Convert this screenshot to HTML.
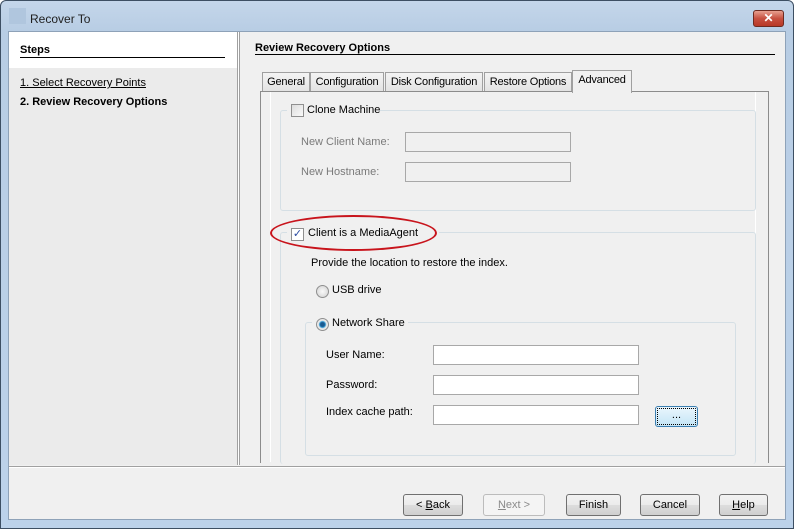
<!DOCTYPE html>
<html><head><style>
*{margin:0;padding:0;box-sizing:border-box}
body{width:794px;height:529px;overflow:hidden;background:#fff;font-family:"Liberation Sans",sans-serif;font-size:11px;color:#000}
.a{position:absolute;white-space:nowrap}
.frame{left:0;top:0;width:794px;height:529px;background:linear-gradient(#c4d6ea,#b8cde4 30px,#bcd2ea);border:1px solid #3d4f63;border-radius:6px 6px 0 0}
.client{left:8px;top:31px;width:778px;height:489px;background:#f0f0f0;border:1px solid #8ea2b8}
.in{border:1px solid #a8a8a8;background:#fff}
.btn{border:1px solid #707070;border-radius:3px;background:linear-gradient(#f2f2f2,#ebebeb 50%,#dddddd 51%,#cfcfcf);text-align:center;line-height:20px;height:22px}
.lbl{color:#7a7a7a}
.grp{border:1px solid #d5dfe5;border-radius:3px}
.cb{width:13px;height:13px;border:1px solid #8f8f8f;background:linear-gradient(135deg,#dcdcdc,#fafafa)}
.rb{width:13px;height:13px;border:1px solid #8f8f8f;border-radius:50%;background:radial-gradient(#fafafa,#d0d0d0)}
.tab{top:72px;height:20px;border:1px solid #a0a0a0;border-bottom:none;background:linear-gradient(#f4f4f4,#e2e2e2);line-height:19px;text-align:center;letter-spacing:-0.2px}
</style></head><body>
<div class="a frame"></div>
<div class="a" style="left:9px;top:8px;width:17px;height:16px;background:#b0c6de"></div>
<div class="a" style="left:30px;top:12px;font-size:12px;color:#1e1e1e">Recover To</div>
<div class="a" style="left:753px;top:10px;width:31px;height:17px;border:1px solid #6d2a20;border-radius:3px;background:linear-gradient(#e8a090,#c75040 50%,#b83826);color:#fff;font-weight:bold;text-align:center;line-height:15px;font-size:12px">✕</div>
<div class="a client"></div>
<div class="a" style="left:9px;top:32px;width:228px;height:36px;background:#fff"></div>
<div class="a" style="left:9px;top:68px;width:228px;height:397px;background:#ebebeb"></div>
<div class="a" style="left:237px;top:32px;width:3px;height:433px;background:#fff;border-left:1px solid #a0a0a0;border-right:1px solid #a0a0a0"></div>
<div class="a" style="left:20px;top:44px;font-weight:bold">Steps</div>
<div class="a" style="left:20px;top:57px;width:205px;border-top:1px solid #000"></div>
<div class="a" style="left:20px;top:77px;text-decoration:underline">1. Select Recovery Points</div>
<div class="a" style="left:20px;top:96px;font-weight:bold">2. Review Recovery Options</div>
<div class="a" style="left:255px;top:42px;font-weight:bold">Review Recovery Options</div>
<div class="a" style="left:255px;top:54px;width:520px;border-top:1px solid #000"></div>
<div class="a tab" style="left:262px;width:48px">General</div>
<div class="a tab" style="left:310px;width:74px">Configuration</div>
<div class="a tab" style="left:385px;width:98px">Disk Configuration</div>
<div class="a tab" style="left:484px;width:88px">Restore Options</div>
<div class="a" style="left:260px;top:91px;width:509px;height:372px;border:1px solid #8c8c8c;border-bottom:none;background:#f0f0f0"></div>
<div class="a tab" style="left:572px;top:70px;width:60px;height:23px;background:#f0f0f0">Advanced</div>
<div class="a" style="left:270px;top:92px;width:486px;height:370px;border-left:1px solid #fff;border-right:1px solid #fff"></div>
<div class="a grp" style="left:280px;top:110px;width:476px;height:101px"></div>
<div class="a" style="left:287px;top:102px;width:92px;height:16px;background:#f0f0f0"></div>
<div class="a cb" style="left:291px;top:104px"></div>
<div class="a" style="left:307px;top:104px">Clone Machine</div>
<div class="a lbl" style="left:301px;top:136px">New Client Name:</div>
<div class="a in" style="left:405px;top:132px;width:166px;height:20px;background:#f0f0f0"></div>
<div class="a lbl" style="left:301px;top:166px">New Hostname:</div>
<div class="a in" style="left:405px;top:162px;width:166px;height:20px;background:#f0f0f0"></div>
<div class="a grp" style="left:280px;top:232px;width:476px;height:232px;border-bottom:none"></div>
<div class="a" style="left:287px;top:224px;width:152px;height:16px;background:#f0f0f0"></div>
<div class="a" style="left:270px;top:215px;width:167px;height:36px;border:2px solid #c8141c;border-radius:50%"></div>
<div class="a cb" style="left:291px;top:228px;background:#fff;color:#2a4aa0;font-size:11px;line-height:11px;text-align:center">✓</div>
<div class="a" style="left:308px;top:227px">Client is a MediaAgent</div>
<div class="a" style="left:311px;top:257px">Provide the location to restore the index.</div>
<div class="a rb" style="left:316px;top:285px"></div>
<div class="a" style="left:332px;top:284px">USB drive</div>
<div class="a grp" style="left:305px;top:322px;width:431px;height:134px"></div>
<div class="a" style="left:312px;top:316px;width:96px;height:16px;background:#f0f0f0"></div>
<div class="a rb" style="left:316px;top:318px;background:radial-gradient(#1a5a90 2px,#3aa0d8 3px,#e8e8e8 4px)"></div>
<div class="a" style="left:332px;top:317px">Network Share</div>
<div class="a" style="left:326px;top:349px">User Name:</div>
<div class="a in" style="left:433px;top:345px;width:206px;height:20px"></div>
<div class="a" style="left:326px;top:379px">Password:</div>
<div class="a in" style="left:433px;top:375px;width:206px;height:20px"></div>
<div class="a" style="left:326px;top:406px">Index cache path:</div>
<div class="a in" style="left:433px;top:405px;width:206px;height:20px"></div>
<div class="a btn" style="left:655px;top:406px;width:43px;height:21px;border-color:#3c7fb1;background:linear-gradient(#eaf6fd,#c4e5f6);line-height:16px;outline:1px dotted #000;outline-offset:-3px">...</div>
<div class="a" style="left:9px;top:466px;width:776px;border-top:1px solid #a0a0a0;border-bottom:1px solid #fff"></div>
<div class="a btn" style="left:403px;top:494px;width:60px">&lt; <u>B</u>ack</div>
<div class="a btn" style="left:483px;top:494px;width:62px;border-color:#bcbcbc;background:#f4f4f4;color:#8a8a8a"><u>N</u>ext &gt;</div>
<div class="a btn" style="left:566px;top:494px;width:55px">Finish</div>
<div class="a btn" style="left:640px;top:494px;width:60px">Cancel</div>
<div class="a btn" style="left:719px;top:494px;width:49px"><u>H</u>elp</div>
</body></html>
